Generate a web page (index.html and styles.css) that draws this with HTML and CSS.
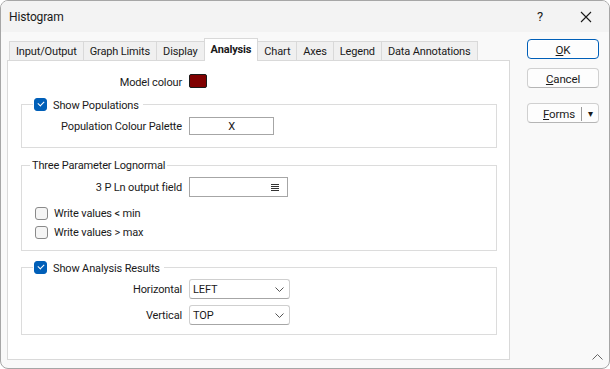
FILE: index.html
```html
<!DOCTYPE html>
<html lang="en">
<head>
   <meta charset="utf-8">
   <title>Histogram</title>
   <link rel="stylesheet" href="styles.css">
</head>
<body>
    <div class="window">
        <div class="titlebar">
            <span class="title">Histogram</span>
            <span class="help">?</span>
            <span class="close">
                <svg width="12" height="12" viewBox="0 0 12 12"><path d="M1 1 L11 11 M11 1 L1 11" stroke="#1a1a1a" stroke-width="1.1" fill="none"/></svg>
            </span>
        </div>
        <div class="client">
            <div class="tabs_area">
                <div class="tabstrip">
                    <div class="tab">Input/Output</div>
                    <div class="tab">Graph Limits</div>
                    <div class="tab">Display</div>
                    <div class="tab selected">Analysis</div>
                    <div class="tab">Chart</div>
                    <div class="tab">Axes</div>
                    <div class="tab">Legend</div>
                    <div class="tab">Data Annotations</div>
                </div>
                <div class="panel">
                    <div class="row model_row">
                        <span class="lbl wide">Model colour</span>
                        <span class="swatch"></span>
                    </div>

                    <fieldset class="group group_pop">
                        <legend class="check_legend"><span class="check on"></span><span class="legend_text">Show Populations</span></legend>
                        <div class="row">
                            <span class="lbl">Population Colour Palette</span>
                            <span class="field palette">X</span>
                        </div>
                    </fieldset>

                    <fieldset class="group group_logn">
                        <legend class="text_legend">Three Parameter Lognormal</legend>
                        <div class="row">
                            <span class="lbl">3 P Ln output field</span>
                            <span class="field output">
                                <svg width="8" height="8" viewBox="0 0 8 8"><path d="M0 0.5 H8 M0 2.5 H8 M0 4.5 H8 M0 6.5 H8" stroke="#333" stroke-width="1"/></svg>
                            </span>
                        </div>
                        <div class="check_row"><span class="check"></span>Write values &lt; min</div>
                        <div class="check_row"><span class="check"></span>Write values &gt; max</div>
                    </fieldset>

                    <fieldset class="group group_res">
                        <legend class="check_legend"><span class="check on"></span><span class="legend_text">Show Analysis Results</span></legend>
                        <div class="row">
                            <span class="lbl">Horizontal</span>
                            <span class="field select">LEFT
                                <svg width="9" height="5" viewBox="0 0 9 5"><path d="M0.5 0.5 L4.5 4.5 L8.5 0.5" stroke="#555" stroke-width="1" fill="none"/></svg>
                            </span>
                        </div>
                        <div class="row select_gap">
                            <span class="lbl">Vertical</span>
                            <span class="field select">TOP
                                <svg width="9" height="5" viewBox="0 0 9 5"><path d="M0.5 0.5 L4.5 4.5 L8.5 0.5" stroke="#555" stroke-width="1" fill="none"/></svg>
                            </span>
                        </div>
                    </fieldset>
                </div>
            </div>
            <div class="side">
                <button class="btn default"><u>O</u>K</button>
                <button class="btn"><u>C</u>ancel</button>
                <button class="btn forms"><span class="forms_text"><u>F</u>orms</span><span class="split"></span><span class="arrow">&#9662;</span></button>
            </div>
        </div>
        <svg class="grip" width="11" height="7" viewBox="0 0 11 7"><path d="M0.5 6.5 L5.5 1.5 L10.5 6.5" stroke="#666" stroke-width="1" fill="none"/></svg>
    </div>
</body>
</html>
```
FILE: styles.css
```css
body {
    margin: 0;
    background-color: #ffffff;
    font-family: Roboto, "Noto Sans", sans-serif;
    font-size: 11px;
    letter-spacing: -0.15px;
    color: #1a1a1a;
}

.window {
    position: relative;
    width: 610px;
    height: 369px;
    box-sizing: border-box;
    border: 1px solid #a6a6a6;
    border-radius: 8px;
    overflow: hidden;
    background-color: #f9f9f9;
}

.titlebar {
    display: flex;
    align-items: center;
    height: 31px;
    background-color: #f3f3f3;
    padding-left: 8px;
}

.title {
    flex: 1;
    font-size: 12px;
}

.help {
    width: 46px;
    text-align: center;
    font-size: 13px;
}

.close {
    width: 46px;
    display: flex;
    justify-content: center;
}

.client {
    display: flex;
    padding-top: 6px;
}

.tabs_area {
    margin-left: 6px;
    width: 503px;
}

.tabstrip {
    display: flex;
    align-items: flex-end;
    padding-left: 2px;
}

.tab {
    height: 19px;
    line-height: 19px;
    box-sizing: border-box;
    padding: 0 6px;
    background-color: #f0f0f0;
    border: 1px solid #d9d9d9;
    border-bottom: none;
    border-right: none;
}

.tab:last-child {
    border-right: 1px solid #d9d9d9;
}

.tab.selected {
    height: 23px;
    line-height: 22px;
    margin-bottom: -1px;
    background-color: #ffffff;
    font-weight: bold;
    position: relative;
    z-index: 1;
    border-right: 1px solid #d9d9d9;
}

.tab.selected + .tab {
    border-left: none;
}

.panel {
    height: 300px;
    box-sizing: border-box;
    background-color: #ffffff;
    border: 1px solid #d9d9d9;
    padding-top: 13px;
}

.row {
    display: flex;
    align-items: center;
}

.lbl {
    width: 160px;
    margin-right: 7px;
    text-align: right;
    padding-top: 1px;
}

.lbl.wide {
    width: 174px;
    padding-top: 3px;
}

.model_row {
    height: 14px;
}

.swatch {
    width: 16px;
    height: 12px;
    background-color: #800000;
    border: 1px solid #1a1a1a;
    border-radius: 2px;
}

.group {
    margin: 0 12px 0 13px;
    padding: 0;
    border: 1px solid #dcdcdc;
    min-width: 0;
}

.group_pop {
    margin-top: 9px;
    padding: 6px 0 12px 0;
}

.group_logn {
    margin-top: 10px;
    padding: 5px 0 8px 0;
}

.group_res {
    margin-top: 9px;
    padding: 5px 0 9px 0;
}

.check_legend {
    display: flex;
    align-items: center;
    height: 14px;
    margin-left: 11px;
    padding: 0 4px 0 1px;
}

.legend_text {
    padding-top: 2px;
}

.text_legend {
    height: 14px;
    line-height: 15px;
    margin-left: 8px;
    padding: 0 2px;
}

.check {
    width: 13px;
    height: 13px;
    box-sizing: border-box;
    border: 1px solid #8a8a8a;
    border-radius: 3px;
    background-color: #f5f5f5;
    margin-right: 6px;
    position: relative;
}

.check.on {
    background-color: #005fb8;
    border-color: #005fb8;
}

.check.on::after {
    content: "";
    position: absolute;
    left: 3px;
    top: 2px;
    width: 5px;
    height: 3px;
    border-left: 1px solid #ffffff;
    border-bottom: 1px solid #ffffff;
    transform: rotate(-45deg);
}

.check_row {
    display: flex;
    align-items: center;
    height: 19px;
    padding-left: 13px;
}

.group_logn .row + .check_row {
    margin-top: 7px;
}

.field {
    box-sizing: border-box;
    background-color: #ffffff;
    border: 1px solid #a6a6a6;
    display: flex;
    align-items: center;
    padding-top: 1px;
}

.palette {
    width: 85px;
    height: 18px;
    justify-content: center;
}

.output {
    width: 99px;
    height: 20px;
    justify-content: flex-end;
    padding-right: 8px;
}

.select {
    width: 101px;
    height: 20px;
    border-color: #cfcfcf;
    border-bottom-color: #a6a6a6;
    border-radius: 3px;
    padding: 1px 5px 0 3px;
    justify-content: space-between;
}

.select_gap {
    margin-top: 6px;
}

.side {
    display: flex;
    flex-direction: column;
    margin-left: 17px;
    padding-top: 1px;
}

button {
    font-family: inherit;
    font-size: 11.5px;
    letter-spacing: -0.15px;
    color: #1a1a1a;
}

.btn {
    width: 72px;
    height: 20px;
    box-sizing: border-box;
    background-color: #fdfdfd;
    border: 1px solid #d0d0d0;
    border-bottom-color: #b5b5b5;
    border-radius: 4px;
    padding: 1px 0 0 0;
    margin-bottom: 9px;
}

.btn.default {
    border: 1px solid #005fb8;
    box-shadow: inset 0 0 0 1px #ffffff;
}

.btn.forms {
    margin-top: 6px;
    display: flex;
    align-items: center;
}

.forms_text {
    flex: 1;
    text-align: right;
    padding-right: 6px;
}

.split {
    width: 1px;
    height: 14px;
    background-color: #9a9a9a;
}

.arrow {
    width: 16px;
    text-align: center;
    font-size: 10px;
}

.grip {
    position: absolute;
    right: 6px;
    bottom: 8px;
}
```
